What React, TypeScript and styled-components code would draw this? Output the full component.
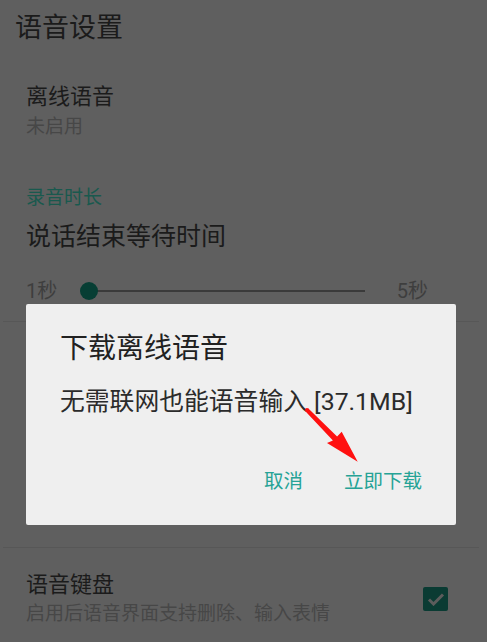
import React from "react";
import styled, { createGlobalStyle } from "styled-components";

const Global = createGlobalStyle`
  html, body { margin: 0; padding: 0; background: #5f5f5f; }
  body { font-family: Roboto, "Noto Sans CJK SC", sans-serif; }
  * { box-sizing: border-box; }
`;

const Screen = styled.div`
  position: relative;
  width: 487px;
  height: 642px;
  overflow: hidden;
  background: #5f5f5f;
`;

const Header = styled.div`
  height: 55px;
  line-height: 56px;
  padding-left: 15px;
  font-size: 27px;
  color: #1b1b1b;
`;

const Item = styled.div<{ $top: number; $bottom: number }>`
  display: flex;
  align-items: center;
  padding: ${(p) => p.$top}px 39px ${(p) => p.$bottom}px 26px;
`;

const ItemText = styled.div`
  flex: 1;
  display: flex;
  flex-direction: column;
`;

const ItemTitle = styled.div<{ $size?: number; $lh?: number }>`
  font-size: ${(p) => p.$size ?? 22}px;
  line-height: ${(p) => p.$lh ?? 30}px;
  color: #1b1b1b;
`;

const ItemSummary = styled.div<{ $lh?: number }>`
  font-size: 19px;
  line-height: ${(p) => p.$lh ?? 29}px;
  color: #474747;
`;

const Category = styled.div`
  padding: 45px 0 0 26px;
  font-size: 19px;
  line-height: 24px;
  color: #19594e;
`;

const SliderTitle = styled.div`
  padding: 10px 0 0 26px;
  font-size: 25px;
  line-height: 34px;
  color: #1b1b1b;
`;

const SliderRow = styled.div`
  display: flex;
  align-items: center;
  height: 30px;
  margin-top: 22px;
  padding: 0 59px 0 26px;
`;

const SliderLabel = styled.span`
  font-size: 20px;
  line-height: 30px;
  color: #3e3e3e;
  white-space: nowrap;
`;

const Track = styled.div`
  position: relative;
  flex: 1;
  height: 18px;
  margin: 0 32px 0 23px;
  display: flex;
  align-items: center;
`;

const TrackLine = styled.div`
  flex: 1;
  height: 2px;
  margin-left: 8px;
  background: #3a3a3a;
`;

const Thumb = styled.div`
  position: absolute;
  left: 0;
  top: 0;
  width: 18px;
  height: 18px;
  border-radius: 50%;
  background: #073e34;
`;

const Divider = styled.div<{ $top?: number }>`
  height: 1px;
  margin: ${(p) => p.$top ?? 0}px 8px 0 3px;
  background: #575757;
`;

const HiddenSection = styled.div`
  height: 225px;
`;

const Checkbox = styled.div`
  width: 25px;
  height: 24px;
  border-radius: 2px;
  background: #0a3b33;
  display: flex;
  align-items: center;
  justify-content: center;
`;

const Dialog = styled.div`
  position: absolute;
  left: 26px;
  top: 304px;
  width: 430px;
  height: 221px;
  background: #efefef;
  border-radius: 2px;
  padding: 27px 34px 28px 34px;
  display: flex;
  flex-direction: column;
`;

const DialogTitle = styled.div`
  font-size: 28px;
  line-height: 36px;
  color: #212121;
`;

const DialogBody = styled.div`
  margin-top: 18px;
  font-size: 24.8px;
  line-height: 34px;
  color: #2b2b2b;
  white-space: nowrap;
`;

const Actions = styled.div`
  margin-top: auto;
  display: flex;
  justify-content: flex-end;
  gap: 41px;
`;

const ActionButton = styled.span`
  font-size: 19.5px;
  line-height: 30px;
  color: #26a396;
`;

const Arrow = styled.svg`
  position: absolute;
  left: 300px;
  top: 400px;
  overflow: visible;
`;

export default function App() {
  return (
    <>
      <Global />
      <Screen>
        <Header>语音设置</Header>
        <Item $top={27} $bottom={0}>
          <ItemText>
            <ItemTitle>离线语音</ItemTitle>
            <ItemSummary>未启用</ItemSummary>
          </ItemText>
        </Item>
        <Category>录音时长</Category>
        <SliderTitle>说话结束等待时间</SliderTitle>
        <SliderRow>
          <SliderLabel>1秒</SliderLabel>
          <Track>
            <Thumb />
            <TrackLine />
          </Track>
          <SliderLabel>5秒</SliderLabel>
        </SliderRow>
        <Divider $top={15} />
        <HiddenSection />
        <Divider />
        <Item $top={22} $bottom={10}>
          <ItemText>
            <ItemTitle>语音键盘</ItemTitle>
            <ItemSummary $lh={27}>启用后语音界面支持删除、输入表情</ItemSummary>
          </ItemText>
          <Checkbox>
            <svg width="18" height="14" viewBox="0 0 18 14">
              <path d="M2 7.5 L6.5 12 L16 2.5" fill="none" stroke="#5c5c5c" strokeWidth="3" />
            </svg>
          </Checkbox>
        </Item>
        <Dialog>
          <DialogTitle>下载离线语音</DialogTitle>
          <DialogBody>无需联网也能语音输入 [37.1MB]</DialogBody>
          <Actions>
            <ActionButton>取消</ActionButton>
            <ActionButton>立即下载</ActionButton>
          </Actions>
        </Dialog>
        <Arrow width="70" height="70" viewBox="0 0 70 70">
          <path
            d="M8.4 8.6 L37.1 36.4 L41.7 31.7 L57.7 61.7 L27 43 L32.9 40.6 L5.6 11.4 Z"
            fill="#ff1010"
          />
          <circle cx="7" cy="10" r="2" fill="#ff1010" />
        </Arrow>
      </Screen>
    </>
  );
}
